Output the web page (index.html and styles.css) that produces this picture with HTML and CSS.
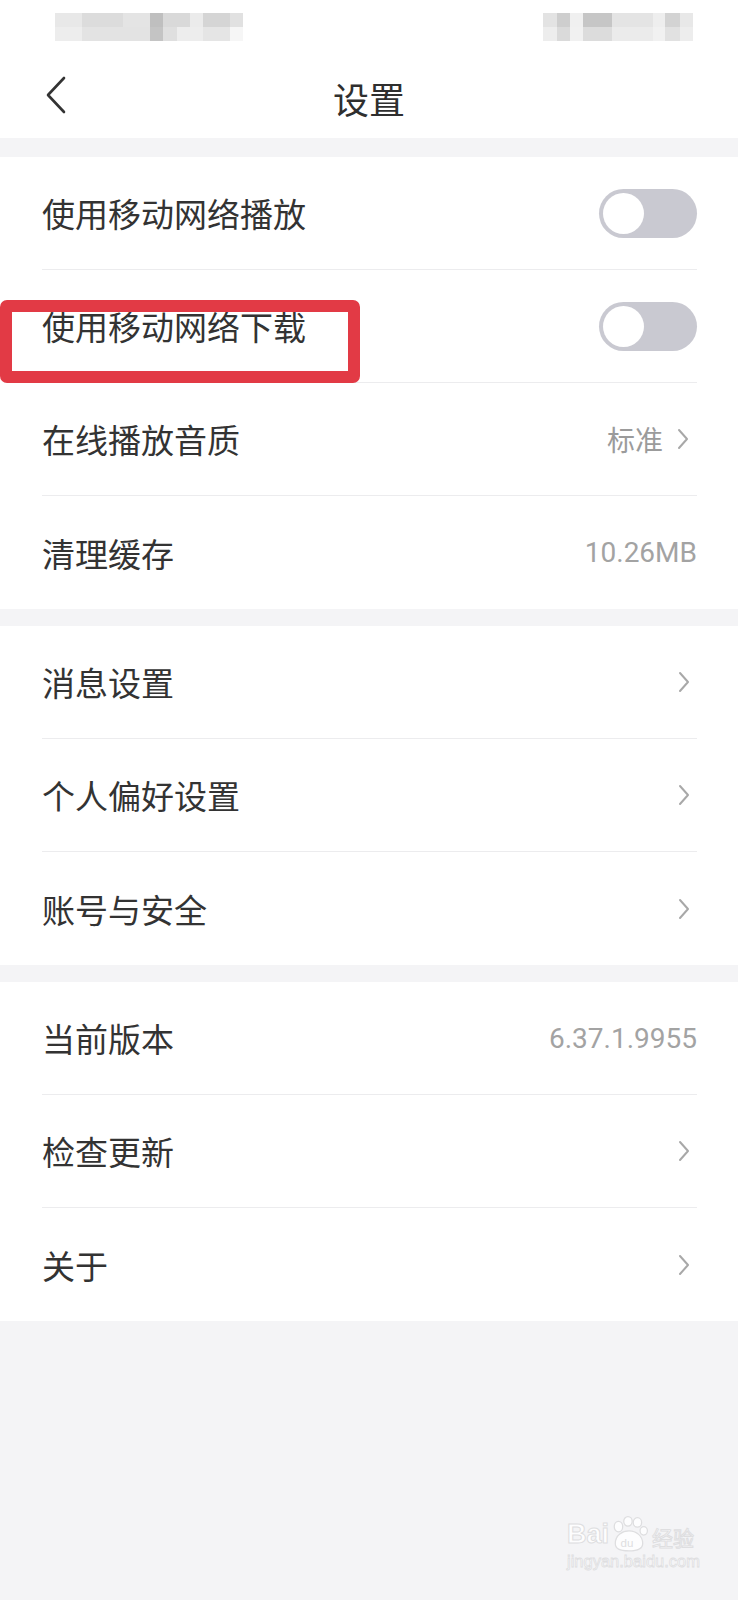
FILE: index.html
```html
<!DOCTYPE html>
<html lang="zh-CN">
<head>
  <meta charset="UTF-8" />
  <meta name="viewport" content="width=device-width, initial-scale=1.0" />
  <title>设置</title>
  <link rel="stylesheet" href="styles.css">
</head>
<body>
  <div class="top">
    <div class="status-bar">
      <div class="blur blur-left"></div>
      <div class="blur blur-right"></div>
    </div>
    <div class="nav-bar">
      <svg class="back" width="24" height="38" viewBox="0 0 24 38">
        <path d="M20 2 L4 19 L20 36" fill="none" stroke="#333" stroke-width="2.6" stroke-linecap="round" stroke-linejoin="round"/>
      </svg>
      <h1 class="title">设置</h1>
      <span></span>
    </div>
  </div>

  <div class="group">
    <div class="row">
      <span class="label">使用移动网络播放</span>
      <div class="switch"><div class="knob"></div></div>
    </div>
    <div class="row">
      <span class="label">使用移动网络下载</span>
      <div class="switch"><div class="knob"></div></div>
    </div>
    <div class="row">
      <span class="label">在线播放音质</span>
      <span class="value">标准 <svg class="arrow" width="12" height="22" viewBox="0 0 12 22"><path d="M2 2 L10 11 L2 20" fill="none" stroke="#a8a8a8" stroke-width="2" stroke-linecap="round" stroke-linejoin="round"/></svg></span>
    </div>
    <div class="row">
      <span class="label">清理缓存</span>
      <span class="value num">10.26MB</span>
    </div>
  </div>

  <div class="group">
    <div class="row">
      <span class="label">消息设置</span>
      <svg class="arrow only" width="12" height="22" viewBox="0 0 12 22"><path d="M2 2 L10 11 L2 20" fill="none" stroke="#a8a8a8" stroke-width="2" stroke-linecap="round" stroke-linejoin="round"/></svg>
    </div>
    <div class="row">
      <span class="label">个人偏好设置</span>
      <svg class="arrow only" width="12" height="22" viewBox="0 0 12 22"><path d="M2 2 L10 11 L2 20" fill="none" stroke="#a8a8a8" stroke-width="2" stroke-linecap="round" stroke-linejoin="round"/></svg>
    </div>
    <div class="row">
      <span class="label">账号与安全</span>
      <svg class="arrow only" width="12" height="22" viewBox="0 0 12 22"><path d="M2 2 L10 11 L2 20" fill="none" stroke="#a8a8a8" stroke-width="2" stroke-linecap="round" stroke-linejoin="round"/></svg>
    </div>
  </div>

  <div class="group">
    <div class="row">
      <span class="label">当前版本</span>
      <span class="value num">6.37.1.9955</span>
    </div>
    <div class="row">
      <span class="label">检查更新</span>
      <svg class="arrow only" width="12" height="22" viewBox="0 0 12 22"><path d="M2 2 L10 11 L2 20" fill="none" stroke="#a8a8a8" stroke-width="2" stroke-linecap="round" stroke-linejoin="round"/></svg>
    </div>
    <div class="row">
      <span class="label">关于</span>
      <svg class="arrow only" width="12" height="22" viewBox="0 0 12 22"><path d="M2 2 L10 11 L2 20" fill="none" stroke="#a8a8a8" stroke-width="2" stroke-linecap="round" stroke-linejoin="round"/></svg>
    </div>
  </div>

  <!-- annotation box drawn over the second row -->
  <div class="mark"></div>

  <div class="watermark">
    <div class="wm-top">
      <span class="wm-bai">Bai</span>
      <svg class="wm-paw" width="40" height="36" viewBox="0 0 38 34">
        <g fill="#fff" stroke="#dcdcde" stroke-width="1.2">
          <ellipse cx="9" cy="10" rx="4" ry="5"/>
          <ellipse cx="18" cy="5" rx="4" ry="4.5"/>
          <ellipse cx="27" cy="6" rx="4" ry="4.5"/>
          <ellipse cx="33" cy="14" rx="3.5" ry="4"/>
          <path d="M6 26 C6 18 13 14 19 14 C26 14 32 19 32 26 C32 31 28 33 19 33 C10 33 6 31 6 26 Z"/>
        </g>
        <text x="11" y="29" font-size="11" fill="#dcdcde" font-family="Liberation Sans, sans-serif">du</text>
      </svg>
      <span class="wm-cn">经验</span>
    </div>
    <div class="wm-url">jingyan.baidu.com</div>
  </div>
</body>
</html>
```

FILE: styles.css
```css
html {
  background-color: #f4f4f6;
}
body {
  margin: 0;
  padding: 0;
  min-height: 1600px;
  position: relative;
  background-color: #f4f4f6;
  font-family: "Noto Sans CJK SC", "Noto Sans", sans-serif;
  color: #333;
}
.top {
  background-color: #fff;
  margin-bottom: 19px;
}
.status-bar {
  height: 58px;
  box-sizing: border-box;
  padding: 13px 45px 0 55px;
  display: flex;
  justify-content: space-between;
}
.blur {
  height: 28px;
  opacity: 0.9;
}
.blur-left {
  width: 188px;
  background:
    linear-gradient(90deg, #e6e6e6 0 27px, #d9d9d9 27px 68px, #e2e2e2 68px 95px, #b9b9b9 95px 108px, #d5d5d5 108px 135px, #e9e9e9 135px 148px, #d1d1d1 148px 175px, #dedede 175px) top / 100% 14px no-repeat,
    linear-gradient(90deg, #ececec 0 27px, #e0e0e0 27px 95px, #bebebe 95px 108px, #dcdcdc 108px 122px, #ececec 122px 148px, #e3e3e3 148px 175px, #f6f6f6 175px) bottom / 100% 14px no-repeat;
}
.blur-right {
  width: 150px;
  background:
    linear-gradient(90deg, #e0e0e0 0 14px, #c9c9c9 14px 27px, #efefef 27px 40px, #c0c0c0 40px 69px, #e2e2e2 69px 110px, #ededed 110px 122px, #cfcfcf 122px 137px, #e6e6e6 137px) top / 100% 14px no-repeat,
    linear-gradient(90deg, #ececec 0 14px, #d7d7d7 14px 27px, #f0f0f0 27px 40px, #d9d9d9 40px 69px, #e9e9e9 69px 110px, #f0f0f0 110px 122px, #dedede 122px 137px, #ececec 137px) bottom / 100% 14px no-repeat;
}
.nav-bar {
  height: 80px;
  display: grid;
  grid-template-columns: 1fr auto 1fr;
  align-items: center;
}
.back {
  display: block;
  margin: -6px 0 0 44px;
}
.title {
  margin: 0;
  font-size: 36px;
  font-weight: 400;
  color: #2f2f2f;
  line-height: 1;
}
.group {
  background-color: #fff;
  padding: 0 41px 0 42px;
  margin-bottom: 17px;
}
.row {
  height: 113px;
  box-sizing: border-box;
  display: flex;
  align-items: center;
  justify-content: space-between;
  border-bottom: 1px solid #ececee;
}
.row:last-child {
  border-bottom: none;
}
.label {
  font-size: 33px;
  color: #333;
}
.value {
  font-size: 28px;
  color: #9b9b9b;
  display: flex;
  align-items: center;
  gap: 14px;
}
.value .arrow {
  margin-right: 8px;
}
.num {
  font-family: Roboto, "Noto Sans", sans-serif;
  color: #a3a3a3;
}
.arrow.only {
  margin-right: 7px;
}
.switch {
  width: 98px;
  height: 49px;
  border-radius: 25px;
  background-color: #c9c9d1;
  box-sizing: border-box;
  padding: 4px;
}
.knob {
  width: 41px;
  height: 41px;
  border-radius: 50%;
  background-color: #fff;
}
.mark {
  position: absolute;
  left: 0;
  top: 300px;
  width: 360px;
  height: 83px;
  box-sizing: border-box;
  border: 12px solid #e23a45;
  border-radius: 7px;
}
.watermark {
  position: absolute;
  left: 567px;
  top: 1516px;
  color: #fff;
  opacity: 0.9;
}
.wm-top {
  display: flex;
  align-items: flex-end;
}
.wm-bai {
  font-family: "Liberation Sans", sans-serif;
  font-weight: bold;
  font-size: 27px;
  line-height: 1;
  color: #fff;
  -webkit-text-stroke: 1px #dcdcde;
}
.wm-paw {
  display: block;
  margin-bottom: -4px;
}
.wm-cn {
  font-size: 21px;
  line-height: 1;
  color: #fff;
  -webkit-text-stroke: 1px #dcdcde;
  margin-left: 3px;
}
.wm-url {
  font-family: "Liberation Sans", sans-serif;
  font-size: 16.5px;
  color: #fff;
  -webkit-text-stroke: 0.8px #dcdcde;
  margin-top: 4px;
}
```
